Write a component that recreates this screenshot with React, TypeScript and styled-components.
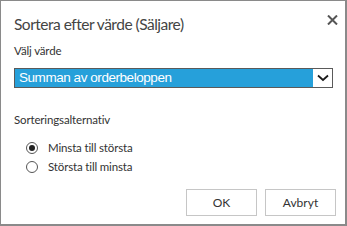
import React, { useState } from "react";
import styled, { createGlobalStyle } from "styled-components";

const GlobalStyle = createGlobalStyle`
  html, body {
    margin: 0;
    padding: 0;
    background: #ffffff;
  }
  body {
    font-family: Lato, "Open Sans", sans-serif;
  }
`;

const Dialog = styled.div`
  box-sizing: border-box;
  width: 347px;
  height: 226px;
  background: #ffffff;
  border-style: solid;
  border-color: #8a8a8a;
  border-width: 1px 2px 2px 1px;
  padding: 12px 9px 8px 13px;
  display: flex;
  flex-direction: column;
`;

const Header = styled.div`
  display: flex;
  justify-content: space-between;
  align-items: flex-start;
  height: 30px;
`;

const Title = styled.h1`
  margin: 0;
  font-size: 15.5px;
  font-weight: 400;
  color: #444444;
  letter-spacing: -0.5px;
  line-height: 22px;
`;

const CloseButton = styled.button`
  border: none;
  background: none;
  padding: 0;
  margin: 0 -3px 0 0;
  width: 14px;
  height: 14px;
  cursor: pointer;
  display: flex;
  align-items: center;
  justify-content: center;
`;

const Label = styled.div`
  font-size: 11.5px;
  letter-spacing: -0.15px;
  color: #333333;
  line-height: 16px;
`;

const SelectBox = styled.div`
  box-sizing: border-box;
  margin-top: 9px;
  width: 319px;
  height: 20px;
  border: 1px solid #5a5a5a;
  display: flex;
  background: #ffffff;
`;

const SelectValue = styled.div`
  flex: 1;
  background: #26a0da;
  color: #ffffff;
  font-family: "Liberation Sans", Arial, sans-serif;
  font-size: 13.5px;
  letter-spacing: -0.45px;
  line-height: 18px;
  padding-left: 4px;
  white-space: nowrap;
`;

const Arrow = styled.div`
  width: 19px;
  display: flex;
  align-items: center;
  justify-content: center;
`;

const Section = styled.div`
  margin-top: 24px;
`;

const RadioList = styled.div`
  display: flex;
  flex-direction: column;
  gap: 2px;
  margin-top: 11px;
  padding-left: 12px;
`;

const RadioRow = styled.label`
  display: flex;
  align-items: center;
  gap: 10px;
  font-size: 11.5px;
  letter-spacing: -0.15px;
  color: #333333;
  line-height: 17px;
  cursor: pointer;
`;

const RadioCircle = styled.span<{ checked: boolean }>`
  box-sizing: border-box;
  width: 12px;
  height: 12px;
  border-radius: 50%;
  border: 1px solid #555555;
  display: flex;
  align-items: center;
  justify-content: center;
  &::after {
    content: "";
    width: 6px;
    height: 6px;
    border-radius: 50%;
    background: ${(p) => (p.checked ? "#222222" : "transparent")};
  }
`;

const Footer = styled.div`
  margin-top: auto;
  display: flex;
  justify-content: flex-end;
  gap: 8px;
`;

const Button = styled.button`
  box-sizing: border-box;
  width: 71px;
  height: 27px;
  background: #ffffff;
  border: 1px solid #c6c6c6;
  font-family: Lato, "Open Sans", sans-serif;
  font-size: 12px;
  color: #333333;
  padding: 0;
  cursor: pointer;
`;

export default (): React.ReactElement => {
  const [order, setOrder] = useState<"asc" | "desc">("asc");

  return (
    <>
      <GlobalStyle />
      <Dialog>
        <Header>
          <Title>Sortera efter värde (Säljare)</Title>
          <CloseButton aria-label="Stäng">
            <svg width="11" height="10" viewBox="0 0 11 10">
              <path
                d="M1 0.5 L10 9.5 M10 0.5 L1 9.5"
                stroke="#555555"
                strokeWidth="2"
                fill="none"
              />
            </svg>
          </CloseButton>
        </Header>
        <Label>Välj värde</Label>
        <SelectBox>
          <SelectValue>Summan av orderbeloppen</SelectValue>
          <Arrow>
            <svg width="12" height="8" viewBox="0 0 12 8">
              <path
                d="M1 1.5 L6 6 L11 1.5"
                stroke="#1a1a1a"
                strokeWidth="1.8"
                fill="none"
              />
            </svg>
          </Arrow>
        </SelectBox>
        <Section>
          <Label>Sorteringsalternativ</Label>
          <RadioList>
            <RadioRow onClick={() => setOrder("asc")}>
              <RadioCircle checked={order === "asc"} />
              Minsta till största
            </RadioRow>
            <RadioRow onClick={() => setOrder("desc")}>
              <RadioCircle checked={order === "desc"} />
              Största till minsta
            </RadioRow>
          </RadioList>
        </Section>
        <Footer>
          <Button>OK</Button>
          <Button>Avbryt</Button>
        </Footer>
      </Dialog>
    </>
  );
};
